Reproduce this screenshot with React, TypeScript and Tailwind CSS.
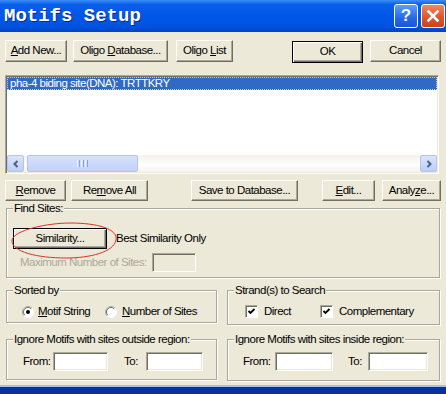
import React from "react";

const FACE = "bg-[#ece9d8]";

function Btn({ className, def, children }: { className: string; def?: boolean; children: React.ReactNode }) {
  return (
    <div
      className={`${className} ${FACE} flex items-center justify-center shrink-0 whitespace-nowrap ${
        def
          ? "border border-black shadow-[inset_1px_1px_0_#fff,inset_-1px_-1px_0_#716f64,inset_-2px_-2px_0_#aca899]"
          : "border border-t-white border-l-white border-b-[#716f64] border-r-[#716f64] shadow-[inset_-1px_-1px_0_#aca899]"
      }`}
    >
      <span>{children}</span>
    </div>
  );
}

function Field({ className }: { className: string }) {
  return (
    <div
      className={`${className} h-[19px] shrink-0 border border-t-[#aca899] border-l-[#aca899] border-b-white border-r-white shadow-[inset_1px_1px_0_#716f64,inset_-1px_-1px_0_#ece9d8]`}
    />
  );
}

function Group({ title, className, children }: { title: string; className: string; children: React.ReactNode }) {
  return (
    <fieldset
      className={`${className} shrink-0 border border-[#aca899] shadow-[inset_1px_1px_0_#fff,1px_1px_0_#fff]`}
    >
      <legend className={`ml-[6px] px-[1px] leading-[12px] whitespace-nowrap ${FACE}`}>{title}</legend>
      {children}
    </fieldset>
  );
}

function Radio({ on }: { on?: boolean }) {
  return (
    <svg width="12" height="12" viewBox="0 0 12 12" className="shrink-0">
      <circle cx="6" cy="6" r="5.5" fill="#fff" />
      <path d="M9.9 2.1 A5.5 5.5 0 0 0 2.1 9.9" stroke="#aca899" fill="none" />
      <path d="M2.1 9.9 A5.5 5.5 0 0 0 9.9 2.1" stroke="#fff" fill="none" />
      <path d="M9.2 2.8 A4.5 4.5 0 0 0 2.8 9.2" stroke="#716f64" fill="none" />
      {on && <circle cx="6" cy="6" r="2" fill="#000" />}
    </svg>
  );
}

function Check() {
  return (
    <div className="w-[13px] h-[13px] shrink-0 bg-white border border-t-[#aca899] border-l-[#aca899] border-b-white border-r-white shadow-[inset_1px_1px_0_#716f64] flex items-center justify-center">
      <svg width="9" height="9" viewBox="0 0 9 9">
        <path d="M1.5 4 L3.5 6 L7.5 2" stroke="#000" strokeWidth="1.8" fill="none" />
      </svg>
    </div>
  );
}

export default function App() {
  return (
    <div className="w-[446px] h-[394px] flex flex-col overflow-hidden font-['Liberation_Sans',Arial,sans-serif] text-[11.5px] tracking-[-0.5px] text-black">
      {/* Title bar */}
      <div className="h-[32px] shrink-0 flex items-center justify-between pl-[4px] pr-[1px] bg-[linear-gradient(to_bottom,#3d8df7_0%,#0a5fea_14%,#0057e6_50%,#0052df_85%,#0342bd_100%)]">
        <span className="font-['Liberation_Mono',monospace] font-bold text-[19px] tracking-normal text-white [text-shadow:1px_1px_0_#0a2a8a]">
          Motifs Setup
        </span>
        <div className="flex items-center gap-[3px]">
          <div className="w-[24px] h-[24px] rounded-[3px] border border-white bg-[linear-gradient(to_bottom,#5aa0fb,#2468ea_60%,#1a56d6)] flex items-center justify-center text-white font-bold text-[17px] tracking-normal font-['Liberation_Sans',sans-serif]">
            ?
          </div>
          <div className="w-[24px] h-[24px] rounded-[3px] border border-white bg-[linear-gradient(to_bottom,#ef8a63,#e0552b_55%,#c9421d)] flex items-center justify-center">
            <svg width="14" height="14" viewBox="0 0 14 14">
              <path d="M2.5 2.5 L11.5 11.5 M11.5 2.5 L2.5 11.5" stroke="#fff" strokeWidth="2.6" strokeLinecap="square" />
            </svg>
          </div>
        </div>
      </div>

      {/* Body */}
      <div className={`relative flex-1 px-[5px] ${FACE}`}>
        <div className="mt-[8px] flex items-start">
          <Btn className="w-[62px] h-[22px]">
            <u>A</u>dd New...
          </Btn>
          <Btn className="ml-[6px] w-[95px] h-[22px]">
            Oligo <u>D</u>atabase...
          </Btn>
          <Btn className="ml-[8px] w-[57px] h-[22px]">
            Oligo <u>L</u>ist
          </Btn>
          <Btn def className="ml-[59px] mt-[1px] w-[71px] h-[22px]">
            OK
          </Btn>
          <Btn className="ml-[7px] w-[71px] h-[22px]">Cancel</Btn>
        </div>

        {/* Motif list */}
        <div className="mt-[12px] w-[434px] h-[99px] p-[1px] flex flex-col bg-white border border-t-[#aca899] border-l-[#aca899] border-b-white border-r-white shadow-[inset_1px_1px_0_#716f64,inset_-1px_-1px_0_#ece9d8]">
          <div className="flex-1">
            <div className="h-[13px] flex items-center pl-[2px] bg-[#316ac5] text-white border border-dotted border-[#c9d6a2] leading-none">
              pha-4 biding site(DNA): TRTTKRY
            </div>
          </div>
          <div className="h-[17px] flex bg-[linear-gradient(to_bottom,#f3f2ec,#fefefe_60%,#f4f3ee)]">
            <div className="w-[17px] h-[17px] rounded-[2px] border border-[#b4c6f2] bg-[linear-gradient(to_bottom,#dbe5fd,#bccdf7)] flex items-center justify-center">
              <svg width="8" height="8" viewBox="0 0 8 8">
                <path d="M5.5 1 L2.5 4 L5.5 7" stroke="#4d6185" strokeWidth="2" fill="none" />
              </svg>
            </div>
            <div className="ml-[3px] w-[111px] h-[17px] rounded-[2px] border border-[#b4c6f2] bg-[linear-gradient(to_bottom,#d6e1fd,#c3d2f9)] flex items-center justify-center gap-[1px]">
              <span className="w-[1px] h-[7px] bg-[#eef3ff]" />
              <span className="w-[1px] h-[7px] bg-[#8ca3d6]" />
              <span className="w-[1px] h-[7px] bg-[#eef3ff]" />
              <span className="w-[1px] h-[7px] bg-[#8ca3d6]" />
              <span className="w-[1px] h-[7px] bg-[#eef3ff]" />
              <span className="w-[1px] h-[7px] bg-[#8ca3d6]" />
            </div>
            <div className="flex-1" />
            <div className="w-[17px] h-[17px] rounded-[2px] border border-[#b4c6f2] bg-[linear-gradient(to_bottom,#dbe5fd,#bccdf7)] flex items-center justify-center">
              <svg width="8" height="8" viewBox="0 0 8 8">
                <path d="M2.5 1 L5.5 4 L2.5 7" stroke="#4d6185" strokeWidth="2" fill="none" />
              </svg>
            </div>
          </div>
        </div>

        <div className="mt-[6px] flex items-start">
          <Btn className="w-[61px] h-[21px]">
            <u>R</u>emove
          </Btn>
          <Btn className="ml-[5px] w-[77px] h-[21px]">
            Re<u>m</u>ove All
          </Btn>
          <Btn className="ml-[43px] w-[107px] h-[21px]">Save to Database...</Btn>
          <Btn className="ml-[24px] w-[53px] h-[21px]">
            <u>E</u>dit...
          </Btn>
          <Btn className="ml-[7px] w-[59px] h-[21px]">
            Analy<u>z</u>e...
          </Btn>
        </div>

        {/* Find sites */}
        <Group title="Find Sites:" className="mt-[1px] ml-[1px] w-[434px] pb-[5px]">
          <div className="pt-[14px] pl-[6px] flex items-center">
            <Btn def className="w-[94px] h-[21px]">
              Similarity...
            </Btn>
            <span className="ml-[9px] whitespace-nowrap">Best Similarity Only</span>
          </div>
          <div className="mt-[4px] pl-[13px] flex items-center">
            <span className="w-[132px] whitespace-nowrap text-[#aca899]">Maximum Number of Sites:</span>
            <Field className={`w-[44px] ${FACE}`} />
          </div>
        </Group>

        <div className="mt-[6px] ml-[1px] flex items-start gap-[10px]">
          <Group title="Sorted by" className="w-[211px] h-[39px]">
            <div className="pt-[7px] pl-[15px] flex items-center whitespace-nowrap">
              <div className="w-[83px] flex items-center gap-[4px]">
                <Radio on />
                <span>
                  <u>M</u>otif String
                </span>
              </div>
              <div className="flex items-center gap-[5px]">
                <Radio />
                <span>
                  <u>N</u>umber of Sites
                </span>
              </div>
            </div>
          </Group>
          <Group title="Strand(s) to Search" className="w-[213px] h-[41px]">
            <div className="pt-[7px] pl-[17px] flex items-center whitespace-nowrap">
              <div className="w-[75px] flex items-center gap-[6px]">
                <Check />
                <span>Direct</span>
              </div>
              <div className="flex items-center gap-[6px]">
                <Check />
                <span>Complementary</span>
              </div>
            </div>
          </Group>
        </div>

        <div className="mt-[8px] ml-[1px] flex items-start gap-[10px]">
          <Group title="Ignore Motifs with sites outside region:" className="w-[211px] h-[47px]">
            <div className="pt-[7px] pl-[16px] flex items-center whitespace-nowrap">
              <span className="w-[30px]">From:</span>
              <Field className="w-[55px] bg-white" />
              <span className="ml-[16px] w-[22px]">To:</span>
              <Field className="w-[57px] bg-white" />
            </div>
          </Group>
          <Group title="Ignore Motifs with sites inside region:" className="w-[213px] h-[48px]">
            <div className="pt-[7px] pl-[15px] flex items-center whitespace-nowrap">
              <span className="w-[32px]">From:</span>
              <Field className="w-[58px] bg-white" />
              <span className="ml-[15px] w-[20px]">To:</span>
              <Field className="w-[60px] bg-white" />
            </div>
          </Group>
        </div>

        {/* hand-drawn highlight */}
        <svg width="116" height="44" viewBox="0 0 116 44" className="absolute left-[8px] top-[188px] pointer-events-none">
          <path
            d="M4 20 C6 10 40 3 62 3 C90 3 110 9 108 20 C106 32 82 38 58 38 C30 38 3 32 4 20 Z"
            stroke="#d8322b"
            strokeWidth="1"
            fill="none"
          />
        </svg>
      </div>

      {/* bottom frame */}
      <div className="h-[9px] shrink-0 flex flex-col">
        <div className="h-[2px] bg-[#9ec1f3]" />
        <div className="flex-1 bg-[#0b2f9e]" />
      </div>
    </div>
  );
}
